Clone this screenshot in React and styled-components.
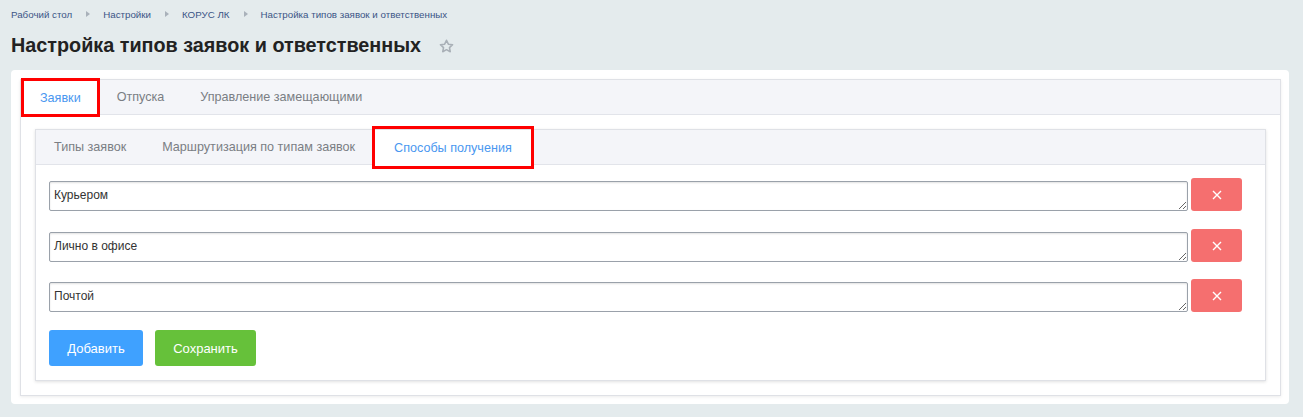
import styled, { createGlobalStyle } from "styled-components";

const GlobalStyle = createGlobalStyle`
  html, body {
    margin: 0;
    padding: 0;
    background: #e4ebed;
    font-family: "Liberation Sans", Arial, sans-serif;
  }
`;

const methods = ["Курьером", "Лично в офисе", "Почтой"];

const App = () => {
  return (
    <>
      <GlobalStyle />
      <Page>
        <Breadcrumbs>
          <Crumb>Рабочий стол</Crumb>
          <Arrow />
          <Crumb>Настройки</Crumb>
          <Arrow />
          <Crumb>КОРУС ЛК</Crumb>
          <Arrow />
          <Crumb>Настройка типов заявок и ответственных</Crumb>
        </Breadcrumbs>
        <TitleRow>
          <Title>Настройка типов заявок и ответственных</Title>
          <Star viewBox="0 0 24 24">
            <path
              d="M12 3.2l2.6 5.5 6 .7-4.4 4.1 1.1 5.9L12 16.5l-5.3 2.9 1.1-5.9-4.4-4.1 6-.7z"
              fill="none"
              stroke="#a9b0b7"
              strokeWidth="2.2"
              strokeLinejoin="round"
            />
          </Star>
        </TitleRow>
        <Card>
          <TabBox>
            <TabBar>
              <Tab $active $marked>Заявки</Tab>
              <Tab>Отпуска</Tab>
              <Tab>Управление замещающими</Tab>
            </TabBar>
            <TabBody>
              <InnerBox>
                <TabBar>
                  <Tab $small>Типы заявок</Tab>
                  <Tab $small>Маршрутизация по типам заявок</Tab>
                  <Tab $small $active $marked>
                    Способы получения
                  </Tab>
                </TabBar>
                <InnerBody>
                  {methods.map((m) => (
                    <Row key={m}>
                      <Field defaultValue={m} />
                      <RemoveButton>
                        <svg width="10" height="10" viewBox="0 0 10 10">
                          <path
                            d="M1 1l8 8M9 1l-8 8"
                            stroke="#fff"
                            strokeWidth="1.4"
                          />
                        </svg>
                      </RemoveButton>
                    </Row>
                  ))}
                  <Actions>
                    <Button $color="#3fa1ff" $width="94px">
                      Добавить
                    </Button>
                    <Button $color="#66c13a" $width="101px">
                      Сохранить
                    </Button>
                  </Actions>
                </InnerBody>
              </InnerBox>
            </TabBody>
          </TabBox>
        </Card>
      </Page>
    </>
  );
};

export default App;

const Page = styled.div`
  padding: 8px 14px 13px 11px;
`;

const Breadcrumbs = styled.div`
  display: flex;
  align-items: center;
  height: 12px;
  font-size: 9.75px;
  color: #3b5586;
`;

const Crumb = styled.span`
  white-space: nowrap;
`;

const Arrow = styled.span`
  width: 0;
  height: 0;
  margin: 0 13px 0 14px;
  border-top: 3px solid transparent;
  border-bottom: 3px solid transparent;
  border-left: 4px solid #a9b1ba;
`;

const TitleRow = styled.div`
  display: flex;
  align-items: center;
  margin-top: 13px;
  height: 24px;
`;

const Title = styled.h1`
  margin: 0;
  font-size: 19.8px;
  font-weight: bold;
  color: #222;
`;

const Star = styled.svg`
  width: 17px;
  height: 17px;
  margin-left: 17px;
  margin-top: 2px;
`;

const Card = styled.div`
  margin-top: 13px;
  background: #fff;
  border-radius: 4px;
  padding: 9px 8px 8px 9px;
`;

const TabBox = styled.div`
  border: 1px solid #dfe1e6;
  box-shadow: 0 1px 3px rgba(0, 0, 0, 0.08);
`;

const TabBar = styled.div`
  display: flex;
  height: 34px;
  background: #f4f5f9;
  border-bottom: 1px solid #e2e4ea;
`;

const Tab = styled.div`
  position: relative;
  display: flex;
  align-items: center;
  justify-content: center;
  padding: 0 ${(p) => (p.$active && p.$small ? "19px" : "18px")};
  margin-left: ${(p) => (p.$active && p.$small ? "2px" : "0")};
  font-size: 12.6px;
  color: ${(p) => (p.$active ? "#4a97f0" : "#7a7e84")};
  background: ${(p) => (p.$active ? "#fff" : "transparent")};
  margin-bottom: ${(p) => (p.$active ? "-1px" : "0")};
  border-right: ${(p) => (p.$active && p.$small ? "1px solid #dfe1e6" : "none")};
  white-space: nowrap;

  &:first-child {
    padding-left: ${(p) => (p.$small ? "18px" : "19px")};
  }

  ${(p) =>
    p.$marked &&
    `
    &::after {
      content: "";
      position: absolute;
      left: ${p.$small ? "-3px" : "0"};
      right: ${p.$small ? "-3px" : "-1px"};
      top: ${p.$small ? "-4px" : "-2px"};
      bottom: ${p.$small ? "-4px" : "-2px"};
      border: 3px solid #f00;
      pointer-events: none;
    }
  `}
`;

const TabBody = styled.div`
  padding: 14px;
`;

const InnerBox = styled.div`
  border: 1px solid #dfe1e6;
  box-shadow: 0 1px 3px rgba(0, 0, 0, 0.12);
`;

const InnerBody = styled.div`
  padding: 13px 23px 14px 13px;
  display: flex;
  flex-direction: column;
`;

const Row = styled.div`
  display: flex;
  align-items: flex-end;
  gap: 3px;
  height: 33px;
  margin-bottom: 17px;

  &:first-child,
  &:nth-child(3) {
    margin-bottom: 18px;
  }
`;

const Field = styled.textarea`
  flex: 1;
  box-sizing: border-box;
  height: 30px;
  margin: 0;
  padding: 6px 4px;
  font-family: "Liberation Sans", Arial, sans-serif;
  font-size: 12px;
  color: #333;
  border: 1px solid #9aa1aa;
  border-radius: 2px;
  box-shadow: inset 0 1px 2px rgba(0, 0, 0, 0.12);
  outline: none;
  overflow: hidden;
`;

const RemoveButton = styled.button`
  width: 51px;
  height: 33px;
  display: flex;
  align-items: center;
  justify-content: center;
  border: none;
  border-radius: 3px;
  background: #f56f6f;
  padding: 0;
  cursor: pointer;
`;

const Actions = styled.div`
  display: flex;
  gap: 12px;
`;

const Button = styled.button`
  width: ${(p) => p.$width};
  height: 36px;
  border: none;
  border-radius: 3px;
  background: ${(p) => p.$color};
  color: #fff;
  font-family: "Liberation Sans", Arial, sans-serif;
  font-size: 13px;
  cursor: pointer;
`;
